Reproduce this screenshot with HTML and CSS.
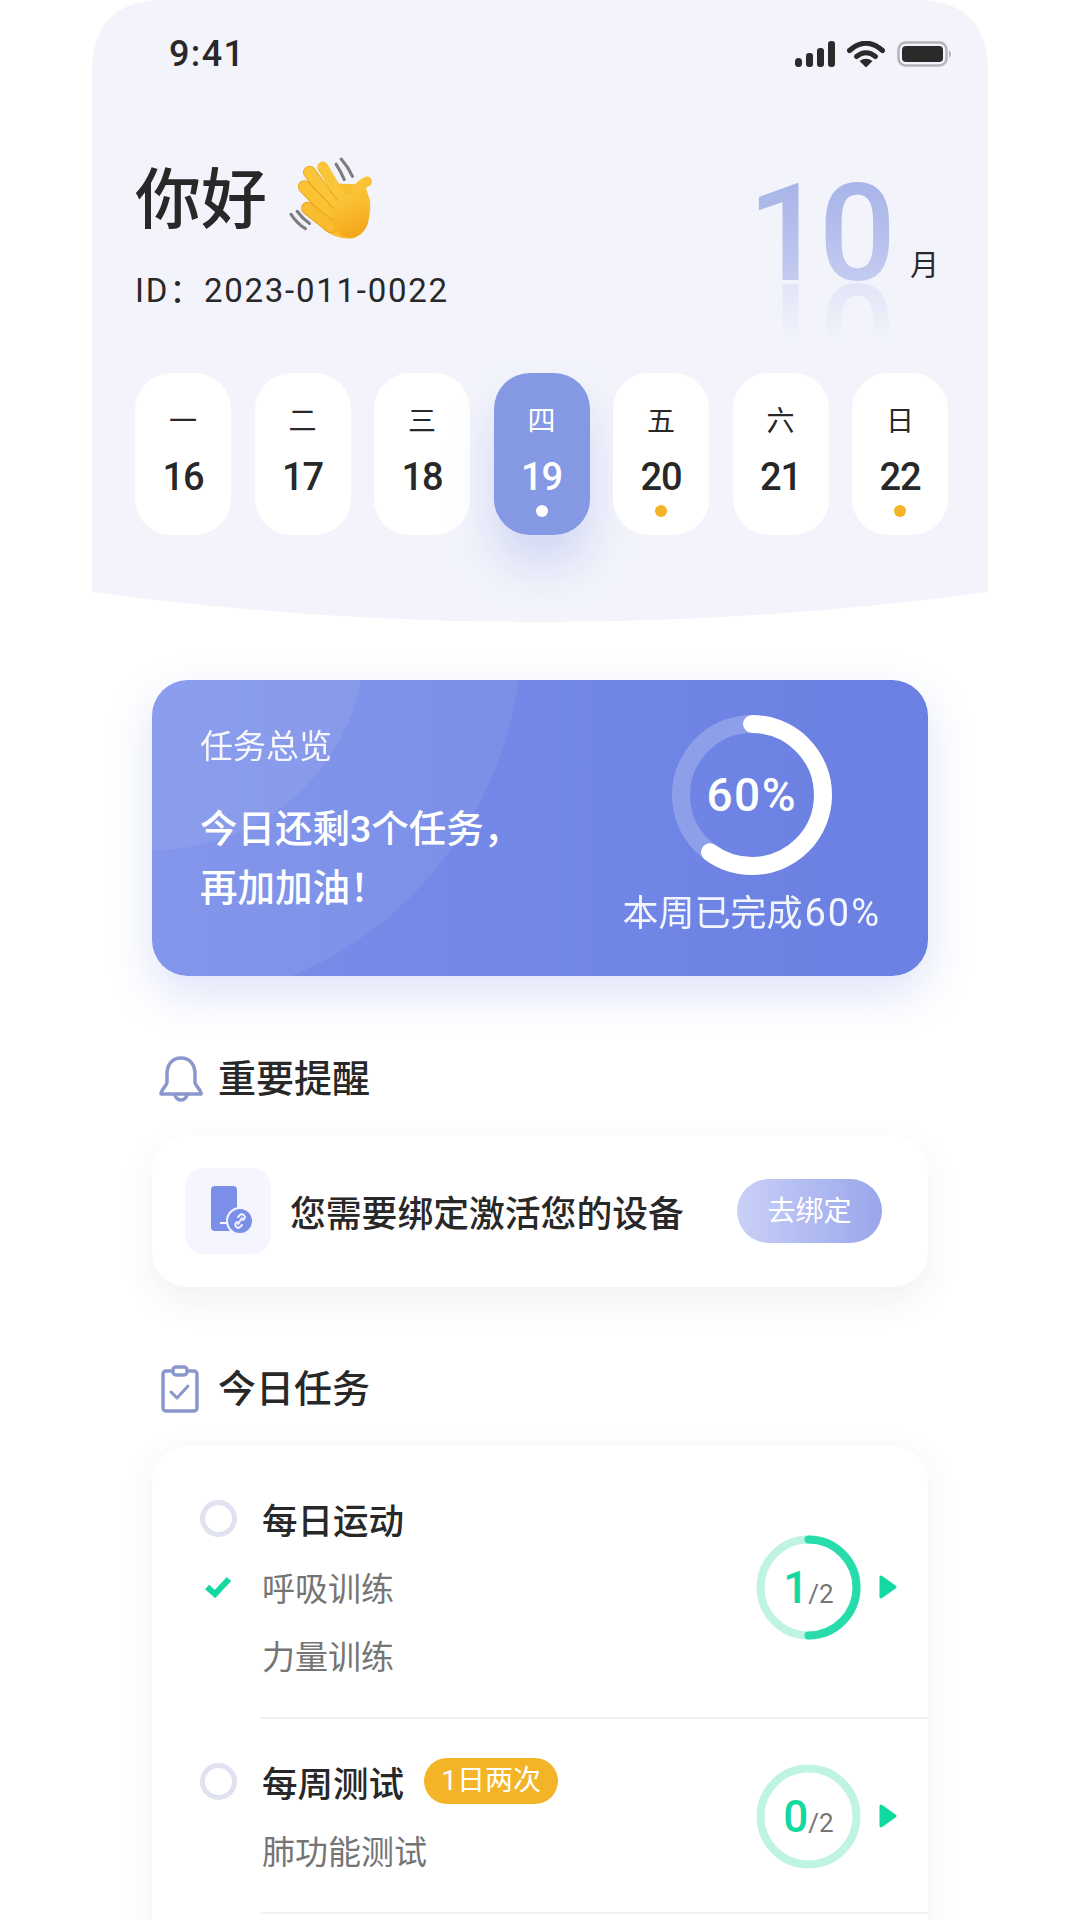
FILE: index.html
```html
<!DOCTYPE html>
<html lang="zh-CN">
  <head>
    <meta charset="UTF-8" />
    <meta name="viewport" content="width=device-width, initial-scale=1.0" />
    <title>今日任务</title>
    <link rel="stylesheet" href="styles.css">
  </head>
  <body>
    <div class="phone">
      <header class="hero">
        <div class="status-bar">
          <span class="status-time">9:41</span>
          <div class="status-icons">
            <svg width="40" height="26" viewBox="0 0 40 26">
              <rect x="0" y="17" width="7" height="9" rx="3.5" />
              <rect x="11" y="12" width="7" height="14" rx="3" />
              <rect x="22" y="7" width="7" height="19" rx="3" />
              <rect x="33" y="0" width="7" height="26" rx="3" />
            </svg>
            <svg width="38" height="26" viewBox="0 0 38 26">
              <path d="M2.5 9.5Q19-5 35.500 9.500" fill="none" stroke="#2a2a2a" stroke-width="5" stroke-linecap="round" />
              <path d="M9.500 15.500Q19 8 28.500 15.500" fill="none" stroke="#2a2a2a" stroke-width="5" stroke-linecap="round" />
              <path d="M12.500 20Q19 15.500 25.500 20L19 26.500Z" />
            </svg>
            <svg width="57" height="26" viewBox="0 0 57 26">
              <rect x="1.500" y="1.500" width="48" height="23" rx="7" fill="none" stroke="#b4b4b8" stroke-width="2.500" />
              <rect x="5" y="5" width="41" height="16" rx="4" />
              <path d="M52 9Q56 13 52 17Z" fill="#b4b4b8" />
            </svg>
          </div>
        </div>

        <div class="greeting">
          <div class="greeting-text">
            <h1 class="hello">
              你好
              <svg class="wave" width="86" height="86" viewBox="21 18 84 84">
                <defs>
                  <linearGradient id="handFill" x1="0" y1="0" x2="0.3" y2="1">
                    <stop offset="0" stop-color="#fcc93e" />
                    <stop offset="1" stop-color="#f4a81c" />
                  </linearGradient>
                </defs>
                <g fill="none" stroke="#7d7d80" stroke-width="3" stroke-linecap="round">
                  <path d="M67 25Q72 33 75 40" />
                  <path d="M72 20Q79 28 83 37" />
                  <path d="M23 74Q29 83 37 88" />
                  <path d="M29 71Q34 78 41 83" />
                </g>
                <path d="M45 70Q62 60 68 44L95 45L100 60Q103 85 85 97Q70 100 55 89Z" fill="#f9bd30" />
                <g stroke-linecap="round" fill="none">
                  <path d="M97 42Q88 46 82 60" stroke="#fbc234" stroke-width="10" />
                  <path d="M54 28L74 62" stroke="#fbc53a" stroke-width="11" />
                  <path d="M41 33L65 66" stroke="#e89a18" stroke-width="12.500" />
                  <path d="M41 33L65 66" stroke="#fbc53a" stroke-width="11" />
                  <path d="M36 47L61 73" stroke="#e89a18" stroke-width="12.500" />
                  <path d="M36 47L61 73" stroke="#fbc234" stroke-width="11" />
                  <path d="M39 68L62 86" stroke="#e89a18" stroke-width="12.500" />
                  <path d="M39 68L62 86" stroke="#f9bc2e" stroke-width="11" />
                </g>
                <ellipse cx="81" cy="76" rx="18" ry="21" fill="url(#handFill)" />
              </svg>
            </h1>
            <p class="user-id">ID：2023-011-0022</p>
          </div>
          <div class="month">
            <span class="month-num">10</span>
            <span class="month-unit">月</span>
          </div>
        </div>

        <div class="week">
          <div class="day"><span class="day-name">一</span><span class="day-num">16</span></div>
          <div class="day"><span class="day-name">二</span><span class="day-num">17</span></div>
          <div class="day"><span class="day-name">三</span><span class="day-num">18</span></div>
          <div class="day day-active"><span class="day-name">四</span><span class="day-num">19</span><i class="dot"></i></div>
          <div class="day"><span class="day-name">五</span><span class="day-num">20</span><i class="dot"></i></div>
          <div class="day"><span class="day-name">六</span><span class="day-num">21</span></div>
          <div class="day"><span class="day-name">日</span><span class="day-num">22</span><i class="dot"></i></div>
        </div>
      </header>

      <main class="content">
        <section class="overview">
          <div class="overview-left">
            <p class="overview-title">任务总览</p>
            <p class="overview-msg">今日还剩3个任务，<br />再加加油！</p>
          </div>
          <div class="overview-right">
            <div class="stack big-ring">
              <svg width="160" height="160" viewBox="0 0 160 160">
                <circle cx="80" cy="80" r="71" fill="none" stroke="#fff" stroke-opacity="0.22" stroke-width="18" />
                <circle cx="80" cy="80" r="71" fill="none" stroke="#fff" stroke-width="18" stroke-linecap="round" stroke-dasharray="267.600 446.100" transform="rotate(-90 80 80)" />
              </svg>
              <span class="big-ring-label">60%</span>
            </div>
            <p class="overview-week">本周已完成<span class="overview-pct">60%</span></p>
          </div>
        </section>

        <h2 class="section-title">
          <svg width="44" height="47" viewBox="0 0 44 47" fill="none" stroke="#8a97cc" stroke-width="3.500" stroke-linejoin="round">
            <path d="M22 2C12 2 8 10 8 18V26C8 30 2 33 2 38H42C42 33 36 30 36 26V18C36 10 32 2 22 2Z" />
            <path d="M16 38A6 6 0 0 0 28 38" />
          </svg>
          重要提醒
        </h2>

        <section class="notice">
          <div class="notice-icon">
            <svg width="46" height="50" viewBox="0 0 46 50">
              <rect x="0" y="0" width="26" height="45" rx="4" fill="#7b8ee8" />
              <rect x="9" y="36" width="8" height="2" fill="#f4f5fe" />
              <circle cx="29" cy="35" r="13" fill="#7b8ee8" stroke="#f4f5fe" stroke-width="2" />
              <g fill="none" stroke="#f4f5fe" stroke-width="2" stroke-linecap="round">
                <path d="M26 36L24.500 37.500A3 3 0 0 0 28.500 41.500L31 39" />
                <path d="M32 34L33.500 32.500A3 3 0 0 0 29.500 28.500L27 31" />
                <path d="M27 38L31 32" />
              </g>
            </svg>
          </div>
          <p class="notice-text">您需要绑定激活您的设备</p>
          <span class="bind-btn">去绑定</span>
        </section>

        <h2 class="section-title section-title-tasks">
          <svg width="38" height="48" viewBox="0 0 38 48" fill="none" stroke="#8a97cc" stroke-width="3.500" stroke-linejoin="round">
            <rect x="2" y="6" width="34" height="40" rx="3" />
            <rect x="12" y="2" width="14" height="8" rx="3" fill="#fff" />
            <path d="M10 27L16 33L27 21" stroke-width="3" stroke-linecap="round" />
          </svg>
          今日任务
        </h2>

        <section class="tasks">
          <div class="task">
            <div class="task-row">
              <div class="task-lines">
                <div class="task-line task-name"><i class="radio"></i>每日运动</div>
                <div class="task-line task-sub">
                  <span class="marker">
                    <svg width="28" height="22" viewBox="0 0 28 22"><path d="M3 11L11 18L25 3" fill="none" stroke="#12d9a2" stroke-width="6" /></svg>
                  </span>呼吸训练
                </div>
                <div class="task-line task-sub"><span class="marker"></span>力量训练</div>
              </div>
              <div class="stack count-ring">
                <svg width="105" height="105" viewBox="0 0 105 105">
                  <circle cx="52.500" cy="52.500" r="48" fill="none" stroke="#bff4e3" stroke-width="8" />
                  <path d="M52.500 4.500A48 48 0 0 1 52.500 100.500" fill="none" stroke="#25dcaa" stroke-width="8" stroke-linecap="round" />
                </svg>
                <span class="count"><b>1</b>/2</span>
              </div>
              <svg class="arrow" width="18" height="24" viewBox="0 0 18 24"><path d="M2 2L16 12L2 22Z" fill="#12d9a2" stroke="#12d9a2" stroke-width="3" stroke-linejoin="round" /></svg>
            </div>
          </div>

          <div class="task">
            <div class="task-row">
              <div class="task-lines">
                <div class="task-line task-name"><i class="radio"></i>每周测试<span class="badge">1日两次</span></div>
                <div class="task-line task-sub"><span class="marker"></span>肺功能测试</div>
              </div>
              <div class="stack count-ring">
                <svg width="105" height="105" viewBox="0 0 105 105">
                  <circle cx="52.500" cy="52.500" r="48" fill="none" stroke="#bff4e3" stroke-width="8" />
                </svg>
                <span class="count"><b>0</b>/2</span>
              </div>
              <svg class="arrow" width="18" height="24" viewBox="0 0 18 24"><path d="M2 2L16 12L2 22Z" fill="#12d9a2" stroke="#12d9a2" stroke-width="3" stroke-linejoin="round" /></svg>
            </div>
          </div>
        </section>
      </main>
    </div>
  </body>
</html>
```

FILE: styles.css
```css
:root {
  --hero-bg: #f3f4fb;
  --text-color: #282828;
  --sub-color: #757575;
  --accent: #8598e4;
  --green: #12d9a2;
  --orange: #f3b527;
  --rule: #f1f1f4;
}

html,
body {
  margin: 0;
  height: 1920px;
  overflow: hidden;
  background: #fff;
}

body {
  font-family: Roboto, "Noto Sans CJK SC", sans-serif;
  color: var(--text-color);
}

h1,
h2,
p {
  margin: 0;
  font-weight: 400;
}

.phone {
  width: 896px;
  margin: 0 auto;
}

.stack {
  display: grid;
  place-items: center;
}

.stack > * {
  grid-area: 1 / 1;
}

/* header */
.hero {
  height: 622px;
  box-sizing: border-box;
  padding: 0 37px 0 43px;
  background: var(--hero-bg);
  clip-path: path("M0 72Q0 0 72 0H824Q896 0 896 72V592Q448 652 0 592Z");
}

.status-bar {
  height: 108px;
  display: flex;
  align-items: center;
  justify-content: space-between;
  padding: 0 0 0 34px;
  margin-right: -3px;
}

.status-time {
  font-size: 36px;
  font-weight: 500;
  letter-spacing: 1.400px;
}

.status-icons {
  display: flex;
  align-items: center;
  gap: 12px;
  fill: #2a2a2a;
}

.greeting {
  height: 265px;
  display: flex;
  justify-content: space-between;
}

.hello {
  display: flex;
  align-items: center;
  gap: 22px;
  height: 90px;
  margin-top: 48px;
  font-size: 66px;
  font-weight: 500;
  line-height: 90px;
}

.wave {
  flex: none;
  margin-top: -2px;
}

.user-id {
  margin-top: 22px;
  font-size: 33px;
  line-height: 46px;
  letter-spacing: 1.750px;
}

.month {
  display: flex;
  align-items: flex-start;
  gap: 20px;
  margin-right: 12px;
  padding-top: 66px;
}

.month-num {
  position: relative;
  font-size: 136px;
  line-height: 120px;
  font-weight: 500;
  letter-spacing: -6px;
  color: transparent;
  background: linear-gradient(180deg, #a6b2e8, #c6cef1);
  -webkit-background-clip: text;
  background-clip: text;
}

/* faded reflection under the month number */
.month-num::after {
  content: "10";
  position: absolute;
  left: 0;
  top: 96px;
  color: transparent;
  background: linear-gradient(0deg, rgba(198, 206, 241, 0.4) 8%, rgba(198, 206, 241, 0) 60%);
  -webkit-background-clip: text;
  background-clip: text;
  transform: scaleY(-1);
}

.month-unit {
  margin-top: 72px;
  font-size: 29px;
  line-height: 40px;
}

.week {
  display: grid;
  grid-template-columns: repeat(7, 96px);
  gap: 23.500px;
}

.day {
  height: 162px;
  box-sizing: border-box;
  padding-top: 31px;
  display: flex;
  flex-direction: column;
  align-items: center;
  background: #fff;
  border-radius: 36px;
}

.day-name {
  font-size: 28px;
  line-height: 36px;
}

.day-num {
  margin-top: 14px;
  font-size: 38px;
  font-weight: 500;
  line-height: 46px;
  letter-spacing: -1px;
}

.dot {
  width: 12px;
  height: 12px;
  margin-top: 5px;
  border-radius: 50%;
  background: var(--orange);
}

.day-active {
  background: var(--accent);
  color: #fff;
  box-shadow: 0 30px 46px rgba(133, 152, 228, 0.3);
}

.day-active .dot {
  background: #fff;
}

/* main column */
.content {
  padding: 58px 60px 0;
}

.overview {
  position: relative;
  height: 296px;
  box-sizing: border-box;
  display: flex;
  justify-content: space-between;
  padding: 35px 47px 0 48px;
  border-radius: 36px;
  background: linear-gradient(90deg, #7a8eea, #6a80e2);
  box-shadow: 0 18px 46px rgba(106, 128, 226, 0.22);
  color: #fff;
  overflow: hidden;
}

/* the two pale quarter circles behind the card text */
.overview::before,
.overview::after {
  content: "";
  position: absolute;
  border-radius: 50%;
  background: rgba(255, 255, 255, 0.07);
}

.overview::before {
  left: -207px;
  top: -250px;
  width: 420px;
  height: 420px;
}

.overview::after {
  left: -380px;
  top: -425px;
  width: 750px;
  height: 750px;
}

.overview-left,
.overview-right {
  position: relative;
  z-index: 1;
}

.overview-title {
  margin-top: 10px;
  font-size: 33px;
  line-height: 44px;
  opacity: 0.92;
}

.overview-msg {
  margin-top: 31px;
  font-size: 37.500px;
  font-weight: 500;
  line-height: 59px;
}

.overview-right {
  display: flex;
  flex-direction: column;
  align-items: center;
}

.big-ring-label {
  font-size: 46px;
  font-weight: 500;
  letter-spacing: 1.500px;
}

.overview-week {
  margin-top: 15px;
  font-size: 36px;
  line-height: 46px;
  opacity: 0.92;
}

.overview-pct {
  letter-spacing: 2px;
  font-size: 38px;
  margin-left: 2px;
}

.section-title {
  display: flex;
  align-items: center;
  gap: 15px;
  height: 48px;
  margin: 79px 0 0 7px;
  font-size: 38px;
  font-weight: 500;
  line-height: 48px;
}

.section-title-tasks {
  margin-top: 78px;
  margin-left: 9px;
  gap: 19px;
}

.notice {
  height: 152px;
  box-sizing: border-box;
  display: flex;
  align-items: center;
  margin-top: 32px;
  padding: 0 46px 0 33px;
  background: #fff;
  border-radius: 36px;
  box-shadow: 0 14px 36px rgba(60, 60, 90, 0.07);
}

.notice-icon {
  flex: none;
  width: 86px;
  height: 86px;
  display: flex;
  align-items: center;
  justify-content: center;
  padding-left: 12px;
  box-sizing: border-box;
  background: #f4f5fe;
  border-radius: 20px;
}

.notice-text {
  flex: 1;
  margin-left: 19px;
  font-size: 35.800px;
  font-weight: 500;
}

.bind-btn {
  width: 145px;
  height: 64px;
  line-height: 65px;
  text-align: center;
  font-size: 28px;
  color: #fff;
  background: linear-gradient(90deg, #c9d0f6, #9aa6ec);
  border-radius: 32px;
}

.tasks {
  margin-top: 33px;
  padding: 39px 0 200px 48px;
  background: #fff;
  border-radius: 36px;
  box-shadow: 0 10px 36px rgba(60, 60, 90, 0.07);
}

.task + .task {
  margin-top: 29px;
}

.task::after {
  content: "";
  display: block;
  height: 2px;
  margin: 28px 0 0 61px;
  background: var(--rule);
}

.task-row {
  display: flex;
  align-items: center;
  padding-right: 31px;
}

.task-lines {
  flex: 1;
}

.task-line {
  display: flex;
  align-items: center;
  height: 68px;
}

.task-name {
  height: 66px;
  margin-bottom: 2px;
  font-size: 35.500px;
  font-weight: 500;
}

.task-sub {
  font-size: 33px;
  color: var(--sub-color);
}

.radio {
  flex: none;
  width: 27px;
  height: 27px;
  margin-right: 25px;
  border: 5px solid #e0e1f1;
  border-radius: 50%;
}

.marker {
  flex: none;
  width: 62px;
  display: flex;
  padding-left: 4px;
  box-sizing: border-box;
}

.badge {
  margin-left: 20px;
  width: 134px;
  height: 46px;
  line-height: 45px;
  text-align: center;
  font-size: 28px;
  font-weight: 400;
  color: #fff;
  background: var(--orange);
  border-radius: 23px;
}

.count-ring {
  flex: none;
  width: 105px;
  height: 105px;
}

.count {
  font-size: 26px;
  color: var(--sub-color);
  margin-top: 2px;
}

.count b {
  font-size: 44px;
  font-weight: 500;
  color: var(--green);
}

.arrow {
  flex: none;
  margin-left: 18px;
}
```
